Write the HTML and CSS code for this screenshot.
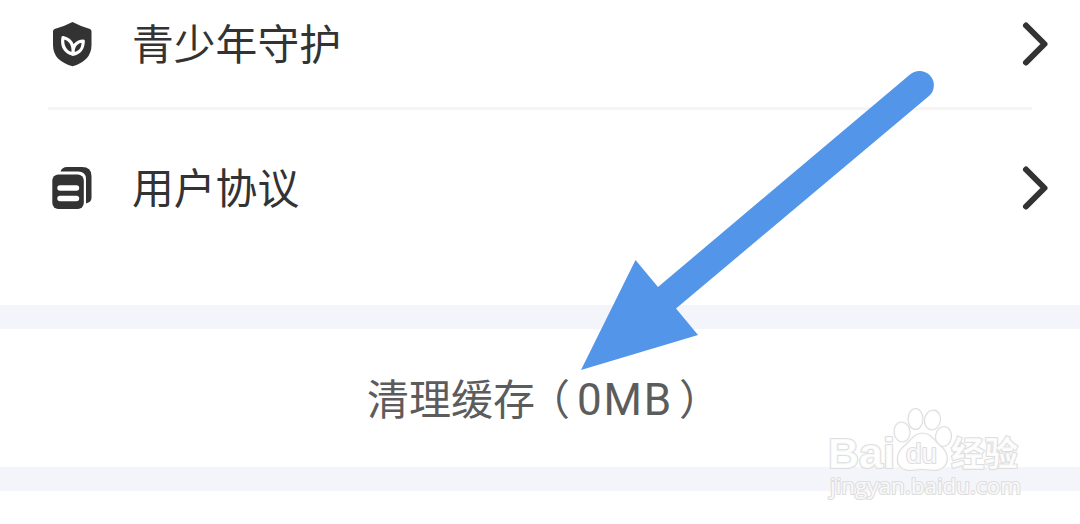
FILE: index.html
```html
<!DOCTYPE html>
<html lang="zh-CN">
<head>
<meta charset="utf-8">
<title>设置</title>
<link rel="stylesheet" href="styles.css">
</head>
<body>
<main class="page">
  <section class="list">
    <div class="row row-first">
      <svg class="row-icon" viewBox="0 0 44 48">
        <path class="dark" d="M22.500 2Q31 6.500 40 9Q41.500 9.500 41.500 11.500V25Q41.500 33 36.500 38.500Q31 44 22.500 46.300Q14 44 8 38.500Q3 33 3 25V11.500Q3 9.500 4.500 9Q14 6.500 22.500 2Z"/>
        <path class="leaf" d="M23 34.300C15 32 11.500 27 13 17.500C20 19 24 24.500 23 34.300ZM23 34.300C30 33 33 29.500 33.300 21C27 21 22.500 25.500 23 34.300Z"/>
      </svg>
      <span class="label">青少年守护</span>
      <svg class="chevron" viewBox="0 0 28 46"><path d="M5 4.500L23.500 23L5 41.500"/></svg>
    </div>
    <div class="row row-second">
      <svg class="row-icon" viewBox="0 0 44 48">
        <path class="dark" d="M10.500 7.500Q12 3 17 3H32Q41.500 3 41.500 12V34Q41.500 38 36 39.500V15Q36 7.500 28 7.500Z"/>
        <rect class="dark" x="2.300" y="10.500" width="31.500" height="34.500" rx="6"/>
        <path class="lines" d="M10 24H26.500M10 34.500H26.500"/>
      </svg>
      <span class="label">用户协议</span>
      <svg class="chevron" viewBox="0 0 28 46"><path d="M5 4.500L23.500 23L5 41.500"/></svg>
    </div>
  </section>
  <section class="cache"><span class="cache-name">清理缓存</span><span class="paren paren-open">（</span><span class="size">0MB</span><span class="paren">）</span></section>
  <footer class="bottom"></footer>

  <svg class="overlay arrow" viewBox="0 0 1080 524">
    <path d="M581 370L635.500 260L658 287L910 74.500A14.300 14.300 0 0 1 929 96L676 308.500L698 335Z"/>
  </svg>
  <svg class="overlay watermark" viewBox="0 0 1080 524">
    <g class="mark">
      <text class="brand" x="828" y="468" textLength="67" lengthAdjust="spacingAndGlyphs">Bai</text>
      <ellipse cx="902" cy="432" rx="7.500" ry="9.500" transform="rotate(-8 902 432)"/>
      <ellipse cx="915.500" cy="419" rx="7" ry="10"/>
      <ellipse cx="932.500" cy="420" rx="7.500" ry="9.500" transform="rotate(10 932.500 420)"/>
      <ellipse cx="943.500" cy="436.500" rx="7.500" ry="9.500" transform="rotate(8 943.500 436.500)"/>
      <path d="M922.500 433.500C931 433.500 934 441 940 446C948 452 949 462 943 467C937 472 930 469 922 469C914 469 907 472 901 467C895 461 898 451 905 446C911 441 914 433.500 922.500 433.500Z"/>
      <text class="du" x="906" y="463" textLength="31" lengthAdjust="spacingAndGlyphs">du</text>
      <text class="cn" x="951" y="466" textLength="67" lengthAdjust="spacingAndGlyphs">经验</text>
      <text class="site" x="830" y="494" textLength="191" lengthAdjust="spacingAndGlyphs">jingyan.baidu.com</text>
    </g>
  </svg>
</main>
</body>
</html>
```

FILE: styles.css
```css
* { box-sizing: border-box; }

body {
  margin: 0;
  background: #fff;
  font-family: "Noto Sans CJK SC", sans-serif;
}

.page {
  position: relative;
  display: flex;
  flex-direction: column;
  height: 524px;
  overflow: hidden;
}

.list { height: 305px; }

.row {
  display: flex;
  align-items: center;
  margin-left: 48px;
  margin-right: 48px;
  color: #333;
}

.row-first {
  height: 110px;
  padding-bottom: 19px;
  border-bottom: 3px solid #f5f5f5;
}

.row-second { height: 156px; }

.row-icon {
  width: 44px;
  height: 48px;
  margin-left: 2px;
}

.dark { fill: #333; }

.leaf {
  fill: none;
  stroke: #fff;
  stroke-width: 3.200;
  stroke-linejoin: round;
}

.lines {
  fill: none;
  stroke: #fff;
  stroke-width: 5.400;
  stroke-linecap: round;
}

.label {
  flex: 1;
  margin-left: 38px;
  padding-bottom: 4px;
  font-size: 41.800px;
  line-height: 60px;
}

.chevron {
  width: 28px;
  height: 46px;
  margin-right: -17px;
  fill: none;
  stroke: #333;
  stroke-width: 6;
  stroke-linecap: round;
  stroke-linejoin: round;
}

.cache {
  display: flex;
  align-items: center;
  height: 186px;
  padding-left: 367px;
  padding-bottom: 2px;
  border-top: 24px solid #f4f5fa;
  border-bottom: 24px solid #f4f5fa;
  color: #5c5c5c;
  font-size: 42px;
  line-height: 60px;
}

.paren-open { margin-left: -7px; }

.size {
  width: 109px;
  padding-top: 6px;
  padding-left: 7px;
  font-family: Roboto, "Liberation Sans", sans-serif;
  font-size: 44px;
  letter-spacing: 1.800px;
}

.bottom { flex: 1; }

.overlay {
  position: absolute;
  top: 0;
  left: 0;
  width: 1080px;
  height: 524px;
  pointer-events: none;
}

.arrow { fill: #5295e9; }

.mark {
  fill: #fff;
  fill-opacity: .85;
  stroke: #dedede;
  stroke-width: 2.200;
  stroke-linejoin: round;
  paint-order: stroke;
}

.brand { font: bold 43px "Liberation Sans", sans-serif; }
.du { font: 28px "Liberation Sans", sans-serif; }
.cn { font: bold 34px "Noto Sans CJK SC", sans-serif; }
.site { font: 22px "Open Sans", "Noto Sans", sans-serif; }
```
